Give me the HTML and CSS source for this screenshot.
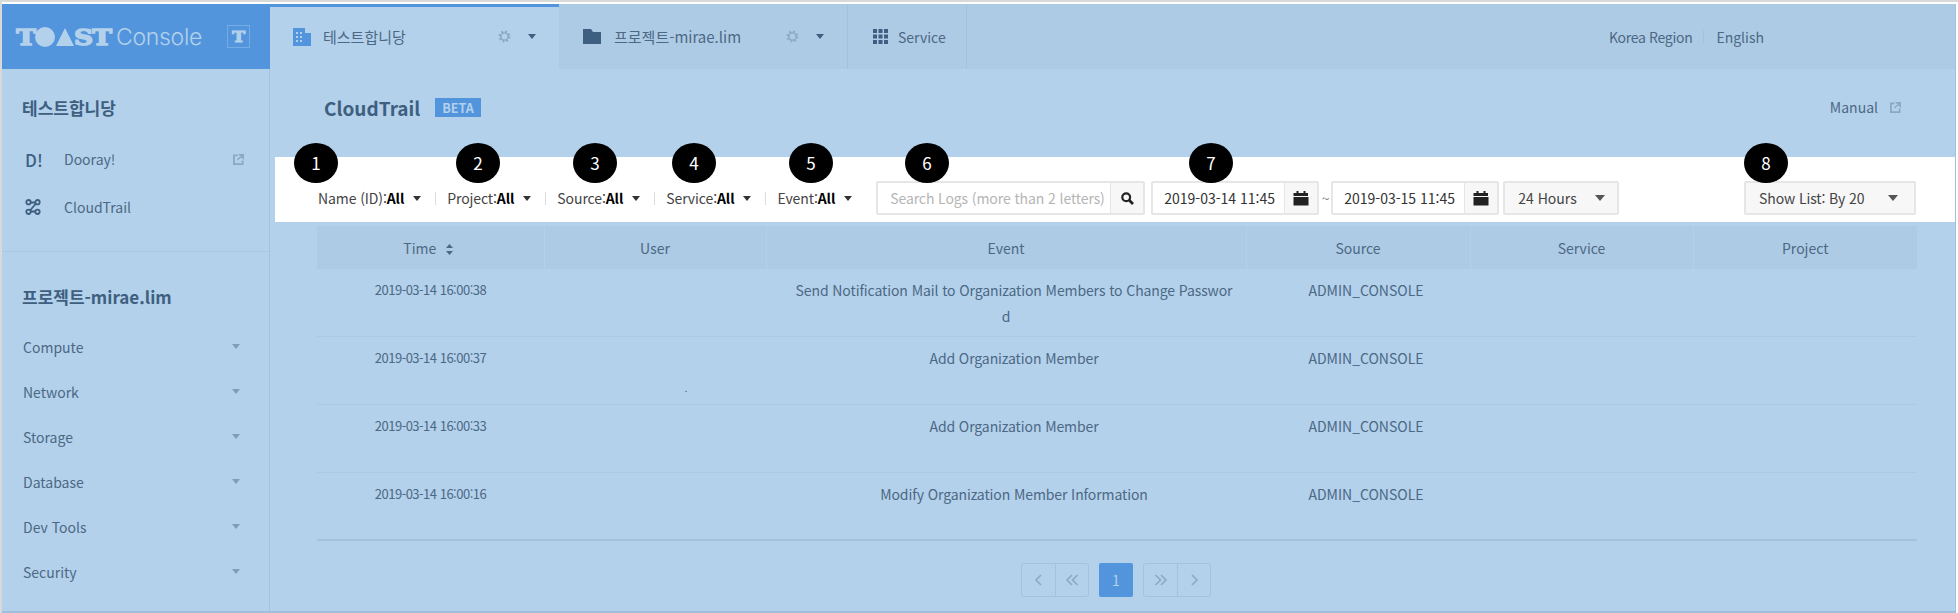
FILE: index.html
```html
<!DOCTYPE html>
<html lang="ko">
<head>
  <meta charset="UTF-8">
  <title>CloudTrail - TOAST Console</title>
  <link rel="stylesheet" href="styles.css">
</head>
<body>
  <svg class="defs" width="0" height="0">
    <symbol id="ic-gear" viewBox="0 0 14 14">
      <circle cx="7" cy="7" r="5.2" fill="none" stroke="currentColor" stroke-width="2.4" stroke-dasharray="2 2.08"/>
      <circle cx="7" cy="7" r="3.9" fill="none" stroke="currentColor" stroke-width="1.5"/>
    </symbol>
    <symbol id="ic-ext" viewBox="0 0 12 12">
      <path d="M5 1.5H1v9.500h9.500V7" fill="none" stroke="currentColor" stroke-width="2"/>
      <path d="M7 0.500h4.500V5z M9.500 1.500L5 6.500" fill="currentColor" stroke="currentColor" stroke-width="1.500"/>
    </symbol>
    <symbol id="ic-cal" viewBox="0 0 16 16">
      <path d="M0.500 3h3V1h2v2h5V1h2v2h2.500v3H0.500z M0.500 7h15v8.500H0.500z" fill="currentColor"/>
    </symbol>
    <symbol id="ic-prev" viewBox="0 0 14 14">
      <path d="M9 2L4 7l5 5" fill="none" stroke="currentColor" stroke-width="1.600"/>
    </symbol>
    <symbol id="ic-first" viewBox="0 0 14 14">
      <path d="M7 2L2 7l5 5M12.500 2L7.500 7l5 5" fill="none" stroke="currentColor" stroke-width="1.600"/>
    </symbol>
    <symbol id="ic-last" viewBox="0 0 14 14">
      <path d="M1.500 2l5 5-5 5M7 2l5 5-5 5" fill="none" stroke="currentColor" stroke-width="1.600"/>
    </symbol>
    <symbol id="ic-next" viewBox="0 0 14 14">
      <path d="M5 2l5 5-5 5" fill="none" stroke="currentColor" stroke-width="1.600"/>
    </symbol>
  </svg>

  <div class="frame">
    <div class="console">

      <aside class="sidebar">
        <div class="brand">
          <div class="logo">
            <span class="logo-t">T</span><i class="logo-o"></i><i class="logo-a"></i><span class="logo-t s">S</span><span class="logo-t">T</span>
          </div>
          <span class="brand-name">Console</span>
          <span class="brand-box"><span class="logo-t small">T</span></span>
        </div>

        <div class="side-group">
          <h2>테스트합니당</h2>
          <a class="side-link">
            <span class="side-ic dooray">D!</span>
            <span>Dooray!</span>
            <svg class="ext side-ext"><use href="#ic-ext"/></svg>
          </a>
          <a class="side-link">
            <span class="side-ic">
              <svg width="16" height="16" viewBox="0 0 16 16" fill="none" stroke="currentColor" stroke-width="1.800">
                <circle cx="3.500" cy="3.200" r="2.200"/>
                <circle cx="12.500" cy="3.200" r="2.200"/>
                <circle cx="3.500" cy="12.800" r="2.200"/>
                <circle cx="12.500" cy="12.800" r="2.200"/>
                <path d="M5.500 3.500h5M5 11.500L11 4.500M5.500 12.500h5"/>
              </svg>
            </span>
            <span>CloudTrail</span>
          </a>
        </div>

        <div class="side-group second">
          <h2>프로젝트-mirae.lim</h2>
          <a class="side-item">Compute<i class="tri"></i></a>
          <a class="side-item">Network<i class="tri"></i></a>
          <a class="side-item">Storage<i class="tri"></i></a>
          <a class="side-item">Database<i class="tri"></i></a>
          <a class="side-item">Dev Tools<i class="tri"></i></a>
          <a class="side-item">Security<i class="tri"></i></a>
        </div>
      </aside>

      <main class="main">
        <div class="topbar">
          <div class="tab active">
            <svg class="tab-ic" width="18" height="18" viewBox="0 0 18 18">
              <path d="M0 0h12v5h6v13H0z" fill="#5295dc"/>
              <path d="M3 4h2v2H3zM7 4h2v2H7zM3 8h2v2H3zM7 8h2v2H7zM3 12h2v2H3zM7 12h2v2H7z" fill="#b3d1eb"/>
            </svg>
            <span>테스트합니당</span>
            <svg class="gear"><use href="#ic-gear"/></svg>
            <i class="caret"></i>
          </div>
          <div class="tab second">
            <svg class="tab-ic" width="18" height="15" viewBox="0 0 18 15">
              <path d="M0 0h8l2 3h8v12H0z" fill="#3e5f80"/>
            </svg>
            <span>프로젝트-mirae.lim</span>
            <svg class="gear"><use href="#ic-gear"/></svg>
            <i class="caret"></i>
          </div>
          <div class="tab service">
            <svg class="tab-ic" width="15" height="15" viewBox="0 0 15 15" fill="#3e5f80">
              <path d="M0 0h4v4H0zM5.500 0h4v4h-4zM11 0h4v4h-4zM0 5.500h4v4H0zM5.500 5.500h4v4h-4zM11 5.500h4v4h-4zM0 11h4v4H0zM5.500 11h4v4h-4zM11 11h4v4h-4z"/>
            </svg>
            <span>Service</span>
          </div>
          <div class="top-right">
            <span class="region">Korea Region</span>
            <i class="top-sep"></i>
            <span>English</span>
          </div>
        </div>

        <div class="title-row">
          <h1>CloudTrail</h1>
          <span class="beta">BETA</span>
          <a class="manual">Manual<svg class="ext"><use href="#ic-ext"/></svg></a>
        </div>

        <div class="toolbar">
          <span class="num n1">1</span>
          <span class="num n2">2</span>
          <span class="num n3">3</span>
          <span class="num n4">4</span>
          <span class="num n5">5</span>
          <span class="num n6">6</span>
          <span class="num n7">7</span>
          <span class="num n8">8</span>

          <div class="filters">
            <div class="filter">Name (ID):<b>All</b><i class="caret dark"></i></div>
            <div class="filter">Project:<b>All</b><i class="caret dark"></i></div>
            <div class="filter">Source:<b>All</b><i class="caret dark"></i></div>
            <div class="filter">Service:<b>All</b><i class="caret dark"></i></div>
            <div class="filter">Event:<b>All</b><i class="caret dark"></i></div>
          </div>

          <div class="field search">
            <span class="field-text placeholder">Search Logs (more than 2 letters)</span>
            <span class="field-btn">
              <svg width="13" height="13" viewBox="0 0 13 13" fill="none" stroke="#222" stroke-width="2.200">
                <circle cx="5.200" cy="5.200" r="3.900"/>
                <path d="M8 8l4 4" stroke-width="2.600"/>
              </svg>
            </span>
          </div>

          <div class="field date">
            <span class="field-text">2019-03-14 11:45</span>
            <span class="field-btn"><svg class="cal"><use href="#ic-cal"/></svg></span>
          </div>
          <span class="tilde">~</span>
          <div class="field date">
            <span class="field-text">2019-03-15 11:45</span>
            <span class="field-btn"><svg class="cal"><use href="#ic-cal"/></svg></span>
          </div>

          <div class="select hours">24 Hours<i class="caret big"></i></div>
          <div class="select show">Show List: By 20<i class="caret big"></i></div>
        </div>

        <table class="logs">
          <colgroup>
            <col class="c-time"><col class="c-user"><col class="c-event"><col class="c-source"><col class="c-service"><col class="c-project">
          </colgroup>
          <thead>
            <tr>
              <th>Time
                <svg class="sort" width="7" height="11" viewBox="0 0 7 11"><path d="M3.500 0L7 4H0zM3.500 11L0 7h7z" fill="#4c6884"/></svg>
              </th>
              <th>User</th>
              <th>Event</th>
              <th>Source</th>
              <th>Service</th>
              <th>Project</th>
            </tr>
          </thead>
          <tbody>
            <tr>
              <td class="time">2019-03-14 16:00:38</td>
              <td></td>
              <td class="event"><span class="shift">Send Notification Mail to Organization Members to Change Password</span></td>
              <td><span class="shift">ADMIN_CONSOLE</span></td>
              <td></td>
              <td></td>
            </tr>
            <tr>
              <td class="time">2019-03-14 16:00:37</td>
              <td><span class="user-dot">.</span></td>
              <td class="event"><span class="shift">Add Organization Member</span></td>
              <td><span class="shift">ADMIN_CONSOLE</span></td>
              <td></td>
              <td></td>
            </tr>
            <tr>
              <td class="time">2019-03-14 16:00:33</td>
              <td></td>
              <td class="event"><span class="shift">Add Organization Member</span></td>
              <td><span class="shift">ADMIN_CONSOLE</span></td>
              <td></td>
              <td></td>
            </tr>
            <tr>
              <td class="time">2019-03-14 16:00:16</td>
              <td></td>
              <td class="event"><span class="shift">Modify Organization Member Information</span></td>
              <td><span class="shift">ADMIN_CONSOLE</span></td>
              <td></td>
              <td></td>
            </tr>
          </tbody>
        </table>

        <div class="pager">
          <div class="page-group">
            <span class="page-btn"><svg><use href="#ic-prev"/></svg></span>
            <span class="page-btn"><svg><use href="#ic-first"/></svg></span>
          </div>
          <span class="page-num">1</span>
          <div class="page-group">
            <span class="page-btn"><svg><use href="#ic-last"/></svg></span>
            <span class="page-btn"><svg><use href="#ic-next"/></svg></span>
          </div>
        </div>
      </main>

    </div>
  </div>
</body>
</html>
```

FILE: styles.css
```css
* {
  box-sizing: border-box;
}

html, body {
  margin: 0;
  height: 100%;
  background: #fff;
  overflow: hidden;
}

body {
  font-family: "Noto Sans CJK KR", "Noto Sans", sans-serif;
  font-size: 14px;
  color: #4c6884;
}

.defs {
  position: absolute;
}

.frame {
  height: 613px;
  border-top: 2px solid #d9d9d9;
  border-left: 2px solid #d9d9d9;
  padding: 2px 2px 0 0;
}

.console {
  display: flex;
  height: 100%;
  background: #b3d1eb;
  border-right: 1px solid #9fbfdc;
  border-bottom: 2px solid #9fbfdc;
}

/* sidebar */
.sidebar {
  width: 268px;
  flex: none;
  border-right: 1px solid #a3c2de;
}

.brand {
  display: flex;
  align-items: center;
  width: 268px;
  height: 65px;
  padding: 0 0 0 15px;
  background: #5295dc;
  color: #b3d1eb;
}

.logo {
  display: flex;
  align-items: center;
  width: 95px;
  height: 20px;
}

.logo-t {
  width: 18px;
  font-family: "DejaVu Serif", serif;
  font-weight: 700;
  font-size: 23px;
  line-height: 20px;
  text-align: center;
  -webkit-text-stroke: 1.5px #b3d1eb;
  transform: scaleX(1.15);
}

.logo-t.s {
  width: 17px;
  margin-right: 1px;
}

.logo-t.small {
  font-size: 15px;
  line-height: 14px;
  width: auto;
  -webkit-text-stroke: 1px #b3d1eb;
}

.logo-o {
  width: 20px;
  height: 20px;
  flex: none;
  border-radius: 50%;
  background: #b3d1eb;
}

.logo-a {
  width: 0;
  height: 0;
  flex: none;
  margin: 0 1px 0 1px;
  border-left: 9.500px solid transparent;
  border-right: 9.500px solid transparent;
  border-bottom: 18px solid #b3d1eb;
}

.brand-name {
  margin-left: 4px;
  font-family: Inter, sans-serif;
  font-weight: 300;
  font-size: 23px;
  letter-spacing: -0.3px;
}

.brand-box {
  display: flex;
  align-items: center;
  justify-content: center;
  width: 23px;
  height: 23px;
  margin-left: auto;
  margin-right: 20px;
  border: 1px solid #76ace4;
}

.side-group {
  padding: 26px 0 0;
  height: 183px;
  border-bottom: 1px solid #a9c8e4;
}

.side-group.second {
  height: auto;
  padding-top: 32px;
  border-bottom: none;
}

.side-group h2 {
  margin: 0 0 14px 20px;
  font-size: 17px;
  line-height: 26px;
  font-weight: 700;
  color: #3e5f80;
}

.side-link {
  display: flex;
  align-items: center;
  height: 48px;
  padding: 0 25px 0 23px;
}

.side-ic {
  display: flex;
  width: 39px;
  color: #3e5f80;
}

.dooray {
  font-size: 17px;
  font-weight: 500;
}

.ext {
  width: 11px;
  height: 11px;
  color: #8ba8c6;
}

.side-ext {
  margin-left: auto;
}

.side-item {
  display: flex;
  align-items: center;
  justify-content: space-between;
  height: 45px;
  padding: 0 29px 0 21px;
}

.tri {
  border-left: 4px solid transparent;
  border-right: 4px solid transparent;
  border-top: 5px solid #7f9cbb;
}

/* top tabs */
.main {
  flex: 1;
  min-width: 0;
}

.topbar {
  display: flex;
  height: 65px;
  background: #aecbe5;
}

.tab {
  display: flex;
  align-items: center;
  width: 289px;
  padding: 0 23px;
  border-right: 1px solid #a3c2de;
  font-size: 15px;
}

.tab.active {
  background: #b3d1eb;
  border-top: 3px solid #5295dc;
  border-right: none;
  padding-bottom: 3px;
}

.tab.second {
  padding-left: 24px;
}

.tab.second .tab-ic {
  margin-right: 13px;
}

.tab.service {
  width: 119px;
  padding-left: 25px;
  font-size: 14px;
}

.tab.service .tab-ic {
  margin-right: 10px;
}

.tab-ic {
  margin-right: 12px;
  flex: none;
}

.gear {
  width: 13px;
  height: 13px;
  margin-left: auto;
  margin-right: -1px;
  color: #8ba8c6;
}

.caret {
  margin-left: 18px;
  border-left: 4.500px solid transparent;
  border-right: 4.500px solid transparent;
  border-top: 5px solid #3e5f80;
}

.top-right {
  display: flex;
  align-items: center;
  margin-left: auto;
  padding-right: 191px;
}

.region {
  letter-spacing: -0.3px;
}

.top-sep {
  width: 1px;
  height: 13px;
  margin: 0 12px 0 11px;
  background: #a3c2de;
}

/* title */
.title-row {
  display: flex;
  align-items: center;
  height: 88px;
  padding: 0 54px 12px 54px;
}

h1 {
  margin: 0;
  font-size: 19px;
  font-weight: 700;
  color: #3e5f80;
}

.beta {
  margin-left: 15px;
  padding: 0 7px;
  height: 19px;
  line-height: 19px;
  background: #5295dc;
  color: #b3d1eb;
  font-size: 12.500px;
  font-weight: 700;
}

.manual {
  display: flex;
  align-items: center;
  margin-left: auto;
}

.manual .ext {
  margin-left: 12px;
}

/* white filter band */
.toolbar {
  position: relative;
  display: flex;
  align-items: center;
  height: 65px;
  margin-left: 5px;
  padding: 17px 39px 0 43px;
  background: #fff;
  color: #444;
}

.num {
  position: absolute;
  top: -14px;
  width: 44px;
  height: 40px;
  margin-left: -22px;
  border-radius: 50%;
  background: #000;
  color: #fff;
  font-size: 17px;
  line-height: 40px;
  text-align: center;
}

.n1 { left: 41px; }
.n2 { left: 203px; }
.n3 { left: 320px; }
.n4 { left: 419px; }
.n5 { left: 536px; }
.n6 { left: 652px; }
.n7 { left: 936px; }
.n8 { left: 1491px; }

.filters {
  display: flex;
  align-items: center;
}

.filter {
  display: flex;
  align-items: center;
  height: 13px;
  padding: 0 14px 0 11px;
  border-right: 1px solid #ddd;
  letter-spacing: -0.1px;
  white-space: nowrap;
}

.filter:first-child {
  padding-left: 0;
}

.filter:last-child {
  border-right: none;
}

.filter b {
  color: #000;
}

.caret.dark {
  margin-left: 9px;
  border-top-color: #333;
}

.field {
  display: flex;
  height: 34px;
  border: 2px solid #e6e6e6;
  border-radius: 2px;
  background: #fff;
}

.field-text {
  flex: 1;
  line-height: 30px;
  white-space: nowrap;
}

.search {
  width: 269px;
  margin-left: 10px;
}

.search .field-text {
  padding-left: 12px;
  letter-spacing: -0.1px;
}

.placeholder {
  color: #b5b5b5;
}

.field-btn {
  display: flex;
  align-items: center;
  justify-content: center;
  flex: none;
  width: 33px;
  border-left: 1px solid #e6e6e6;
  background: #f7f7f7;
}

.date {
  width: 168px;
  margin-left: 6px;
  color: #333;
}

.date .field-text {
  padding-left: 11px;
}

.cal {
  width: 16px;
  height: 16px;
  color: #222;
}

.tilde {
  width: 13px;
  margin-right: -7px;
  color: #777;
  text-align: center;
}

.select {
  display: flex;
  align-items: center;
  justify-content: space-between;
  height: 34px;
  border: 2px solid #e6e6e6;
  border-radius: 2px;
  background: #f7f7f7;
  color: #444;
  white-space: nowrap;
}

.hours {
  width: 116px;
  margin-left: 4px;
  padding: 0 16px 0 13px;
}

.show {
  width: 172px;
  margin-left: auto;
  padding: 0 16px 0 13px;
  letter-spacing: -0.1px;
}

.caret.big {
  border-left-width: 5.500px;
  border-right-width: 5.500px;
  border-top: 6px solid #555;
}

/* log table */
.logs {
  width: 1600px;
  margin: 4px 0 0 47px;
  table-layout: fixed;
  border-collapse: collapse;
  font-size: 14px;
}

.c-time { width: 227px; }
.c-user { width: 222px; }
.c-event { width: 480px; }
.c-source { width: 224px; }
.c-service { width: 223px; }
.c-project { width: 224px; }

.logs th {
  height: 43px;
  padding: 0;
  background: #aecbe5;
  border-left: 1px solid #b3d1eb;
  font-weight: 400;
}

.logs th:first-child {
  border-left: none;
  padding-right: 4px;
}

.sort {
  margin-left: 6px;
  vertical-align: -1px;
}

.logs td {
  height: 68px;
  padding: 8px 12px 6px;
  vertical-align: top;
  text-align: center;
  line-height: 26px;
  border-bottom: 1px solid #abcae5;
  word-break: break-all;
}

.logs tbody tr:first-child td {
  height: 67px;
}

.logs tr:last-child td {
  border-bottom: 2px solid #a3c2de;
}

.logs .time {
  font-size: 13px;
  letter-spacing: -0.5px;
}

.logs .event {
  letter-spacing: -0.1px;
}

.shift {
  padding-left: 16px;
}

.user-dot {
  display: block;
  margin-top: 38px;
  padding-left: 62px;
  font-size: 9px;
  line-height: 12px;
  color: #3e5f80;
}

/* paging */
.pager {
  display: flex;
  justify-content: center;
  align-items: center;
  gap: 10px;
  margin-top: 22px;
  padding-left: 7px;
}

.page-group {
  display: flex;
  border: 1px solid #a3c2de;
  border-radius: 3px;
}

.page-btn {
  display: flex;
  align-items: center;
  justify-content: center;
  width: 33px;
  height: 32px;
  color: #8ba8c6;
}

.page-btn svg {
  width: 14px;
  height: 14px;
}

.page-btn + .page-btn {
  border-left: 1px solid #a3c2de;
}

.page-num {
  width: 34px;
  height: 34px;
  line-height: 34px;
  text-align: center;
  border-radius: 2px;
  background: #5295dc;
  color: #b3d1eb;
}
```
